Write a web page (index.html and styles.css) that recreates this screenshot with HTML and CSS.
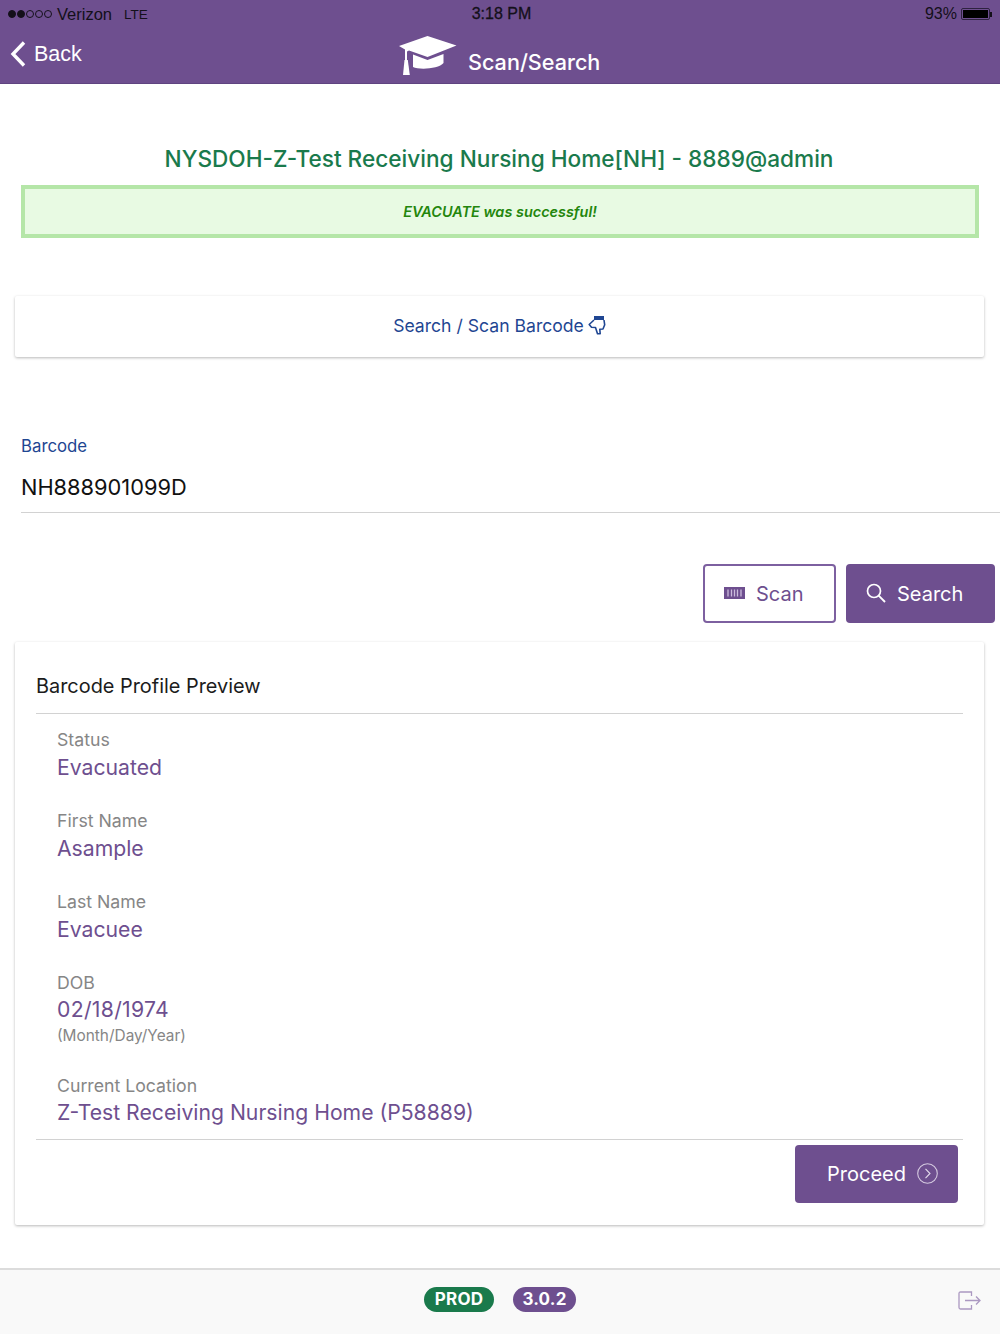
FILE: index.html
```html
<!DOCTYPE html>
<html lang="en">
<head>
<meta charset="utf-8">
<title>Scan/Search</title>
<link rel="stylesheet" href="styles.css">
</head>
<body>
<div class="page">
  <header class="header">
    <div class="statusbar">
      <div class="status-left">
        <span class="signal"><i class="dot on"></i><i class="dot on"></i><i class="dot"></i><i class="dot"></i><i class="dot"></i></span>
        <span>Verizon</span><span class="lte">LTE</span>
      </div>
      <div class="status-time">3:18 PM</div>
      <div class="status-right">
        <span>93%</span>
        <span class="battery"><span class="battery-fill"></span></span>
        <span class="battery-tip"></span>
      </div>
    </div>
    <div class="navbar">
      <div class="back">
        <svg class="back-icon" width="18" height="28" viewBox="0 0 18 28"><path d="M15 2.500 L4 14 L15 25.500" fill="none" stroke="#fff" stroke-width="3.400"/></svg>
        <span>Back</span>
      </div>
      <div class="nav-title">
        <svg class="cap" width="58" height="40" viewBox="0 0 58 40">
          <path fill="#fff" d="M0 10 L28.500 0 L57.500 9.500 L28.500 21 L10 14.500 L8 15.500 L8 24 L6 24 L6 13.500 Z"/>
          <path fill="#fff" d="M14 18.500 L28.500 24 L44.500 18 L44.500 27 C40 33 20 34 14 31 Z"/>
          <path fill="#fff" d="M5.500 24 L8.800 24 L10.800 39 L4 39 Z"/>
        </svg>
        <span class="nav-text">Scan/Search</span>
      </div>
    </div>
  </header>

  <main class="main">
    <h1 class="facility">NYSDOH-Z-Test Receiving Nursing Home[NH] - 8889@admin</h1>
    <div class="alert">EVACUATE was successful!</div>

    <section class="search-card">
      <span>Search / Scan Barcode</span>
      <svg class="hand" width="18" height="20" viewBox="0 0 18 20"><path d="M6 1 H16 V5 H6 Z" fill="#1f4692"/><path d="M6 5 L1.200 9.500 L3.500 12.200 L7.500 12.500 L9.500 18.800 L12.200 18.800 L11.800 14.200 L15 14 L16.700 9.800 L16 5" fill="none" stroke="#1f4692" stroke-width="1.600" stroke-linejoin="round"/></svg>
    </section>

    <div class="field">
      <label class="field-label">Barcode</label>
      <div class="field-value">NH888901099D</div>
    </div>

    <div class="actions">
      <button class="btn btn-outline">
        <svg width="21" height="12" viewBox="0 0 21 12"><rect width="21" height="12" fill="#6e4f8f"/><path d="M4 2.500 V9.500 M7.500 2.500 V9.500 M10.500 2.500 V9.500 M13.500 2.500 V9.500 M17 2.500 V9.500" stroke="#cbbcdc" stroke-width="1.300"/></svg>
        <span>Scan</span>
      </button>
      <button class="btn btn-solid btn-search">
        <svg width="20" height="20" viewBox="0 0 20 20"><circle cx="8" cy="8" r="6.500" fill="none" stroke="#fff" stroke-width="1.700"/><path d="M12.700 12.700 L19 19" stroke="#fff" stroke-width="1.900"/></svg>
        <span>Search</span>
      </button>
    </div>

    <section class="profile-card">
      <h2 class="profile-title">Barcode Profile Preview</h2>
      <dl class="profile-list">
        <div class="item"><dt>Status</dt><dd>Evacuated</dd></div>
        <div class="item"><dt>First Name</dt><dd>Asample</dd></div>
        <div class="item"><dt>Last Name</dt><dd>Evacuee</dd></div>
        <div class="item item-dob"><dt>DOB</dt><dd>02/18/1974</dd><small>(Month/Day/Year)</small></div>
        <div class="item item-last"><dt>Current Location</dt><dd>Z-Test Receiving Nursing Home (P58889)</dd></div>
      </dl>
      <div class="profile-foot">
        <button class="btn btn-solid btn-proceed">
          <span>Proceed</span>
          <svg width="21" height="21" viewBox="0 0 21 21"><circle cx="10.500" cy="10.500" r="9.800" fill="none" stroke="#d5cae0" stroke-width="1.100"/><path d="M8.500 5.800 L13 10.500 L8.500 15.200" fill="none" stroke="#e4dcec" stroke-width="1.100"/></svg>
        </button>
      </div>
    </section>
  </main>

  <footer class="footer">
    <span class="pill pill-green">PROD</span>
    <span class="pill pill-purple">3.0.2</span>
    <svg class="logout" width="23" height="19" viewBox="0 0 23 19"><path d="M13.500 5 V1 H2.500 Q1 1 1 2.500 V16.500 Q1 18 2.500 18 H13.500 V14 M7 9.500 H22 M18 5.500 L22 9.500 L18 13.500" fill="none" stroke="#ab98c1" stroke-width="1.300"/></svg>
  </footer>
</div>
</body>
</html>
```

FILE: styles.css
```css
* { box-sizing: border-box; }
html, body { margin: 0; padding: 0; background: #fff; }
body { font-family: Inter, "Liberation Sans", sans-serif; }
.page { width: 1000px; height: 1334px; display: flex; flex-direction: column; overflow: hidden; }

.header { height: 84px; background: #6e4f8f; border-bottom: 1px solid #5f4480; color: #fff; flex: none; }
.statusbar { height: 28px; display: grid; grid-template-columns: 1fr auto 1fr; align-items: center; padding: 0 8px; font-family: "Liberation Sans", sans-serif; font-size: 16.500px; color: #14101a; }
.status-left { display: flex; align-items: center; }
.signal { display: flex; gap: 1px; margin-right: 5px; }
.dot { width: 8px; height: 8px; border-radius: 50%; border: 1px solid #14101a; display: block; }
.dot.on { background: #14101a; }
.lte { margin-left: 12px; font-size: 13.500px; }
.status-time { font-size: 16px; padding-left: 3px; -webkit-text-stroke: 0.3px #14101a; }
.status-right { display: flex; align-items: center; justify-content: flex-end; font-size: 16px; }
.battery { width: 29px; height: 12px; margin-left: 4px; border: 1px solid #2e2240; border-radius: 2px; padding: 1px; display: block; }
.battery-fill { display: block; width: 100%; height: 100%; background: #000; }
.battery-tip { width: 2px; height: 5px; background: #14101a; }

.navbar { height: 55px; position: relative; display: flex; align-items: center; }
.back { display: flex; align-items: center; font-size: 21.500px; font-family: "Liberation Sans", sans-serif; margin-left: 9px; margin-top: -2px; }
.back-icon { margin-right: 7px; margin-top: -2px; }
.nav-title { position: absolute; left: 399px; top: 6px; display: flex; align-items: flex-end; height: 42px; }
.cap { display: block; }
.nav-text { font-size: 21.600px; font-weight: 500; margin-left: 11px; line-height: 28px; margin-bottom: 0; }

.main { flex: 1; position: relative; }
.facility { margin: 60px 0 0; padding-right: 2px; height: 30px; line-height: 30px; text-align: center; font-size: 22.630px; font-weight: 500; color: #1a7a4c; }
.alert { margin: 11px 21px 0; height: 53px; border: 4px solid #b5e6a8; background: #e8fae3; color: #23860c; font-size: 14.450px; font-weight: 600; font-style: italic; display: flex; align-items: center; justify-content: center; }

.search-card { margin: 58px 16px 0 15px; height: 61px; padding-bottom: 2px; background: #fff; box-shadow: 0 1px 3px rgba(0,0,0,.28); border-radius: 2px; display: flex; align-items: center; justify-content: center; gap: 4px; color: #1f4692; font-size: 17.600px; }
.hand { display: block; margin-top: -1px; }

.field { margin: 77px 0 0 21px; height: 79px; border-bottom: 1px solid #d2d2d2; }
.field-label { display: block; color: #1f4692; font-size: 16.800px; line-height: 22px; padding-top: 1px; }
.field-value { margin-top: 17px; color: #111; font-size: 21.800px; line-height: 26px; }

.actions { margin: 51px 5px 0 0; display: flex; justify-content: flex-end; gap: 10px; }
.btn { height: 59px; border-radius: 4px; font-family: inherit; font-size: 20px; display: flex; align-items: center; }
.btn-outline { width: 133px; background: #fff; border: 2px solid #7d60a0; color: #6e4f8f; padding: 0 0 0 19px; gap: 11px; }
.btn-outline svg { margin-top: -2px; }
.btn-solid { background: #6e4f8f; border: 0; color: #fff; }
.btn-search { width: 149px; padding: 0 0 0 20px; gap: 11px; }
.btn-search svg { margin-top: -2px; }

.profile-card { margin: 19px 16px 0 15px; height: 583px; padding: 0 21px; background: #fff; box-shadow: 0 1px 3px rgba(0,0,0,.28); border-radius: 2px; display: flex; flex-direction: column; }
.profile-title { margin: 0; height: 72px; padding-top: 31px; line-height: 27px; font-size: 19.900px; font-weight: 400; color: #1c1c1c; border-bottom: 1px solid #d2d2d2; }
.profile-list { margin: 0; padding: 15px 0 0 21px; height: 426px; border-bottom: 1px solid #d2d2d2; }
.item { height: 81px; }
.item-dob { height: 103px; }
.item dt { font-size: 17.700px; line-height: 22px; color: #868686; }
.item dd { margin: 2px 0 0; font-size: 21.200px; line-height: 28px; color: #6e4f8f; }
.item-dob dd, .item-last dd { margin-top: 1px; }
.item-dob dd { letter-spacing: .3px; }
.item small { display: block; font-size: 15.400px; line-height: 18px; color: #868686; margin-top: 4px; }
.profile-foot { display: flex; justify-content: flex-end; padding: 5px 5px 0 0; }
.btn-proceed { width: 163px; height: 58px; padding: 0 0 0 32px; gap: 11px; }
.btn-proceed svg { margin-top: -2px; }

.footer { height: 66px; flex: none; background: #f9f9f9; border-top: 2px solid #dcdcdc; position: relative; display: flex; justify-content: center; padding-top: 17px; gap: 19px; }
.pill { height: 25px; border-radius: 13px; color: #fff; font-size: 17px; font-weight: 700; line-height: 25px; display: block; letter-spacing: .2px; }
.pill-green { width: 70px; background: #1a7a4c; text-align: center; }
.pill-purple { width: 63px; background: #6e4f8f; text-align: center; }
.logout { position: absolute; right: 19px; top: 21px; }
```
